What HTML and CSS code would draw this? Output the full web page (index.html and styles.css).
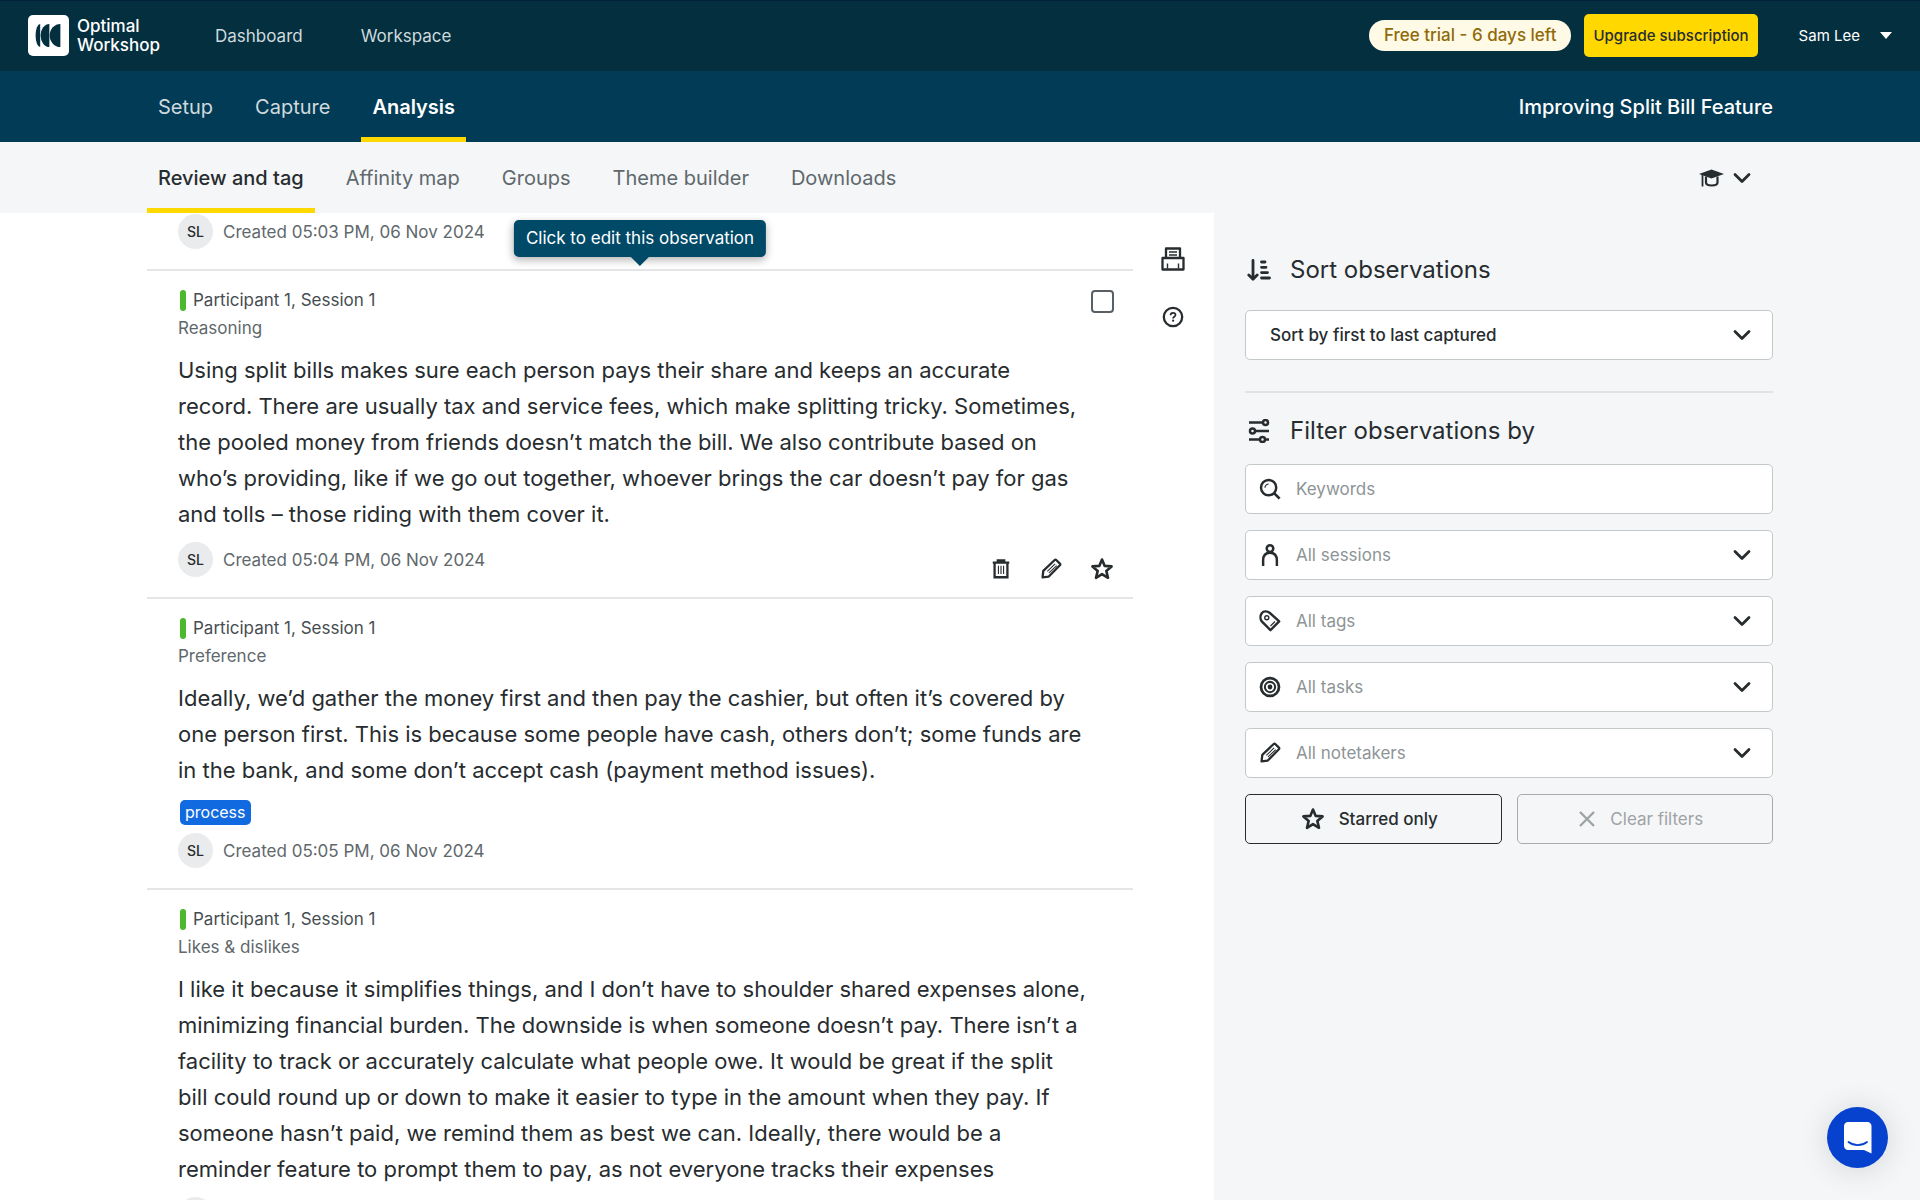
FILE: index.html
```html
<!DOCTYPE html>
<html lang="en">
<head>
  <meta charset="UTF-8" />
  <meta name="viewport" content="width=device-width, initial-scale=1.0" />
  <title>Improving Split Bill Feature - Optimal Workshop</title>
  <link rel="stylesheet" href="styles.css">
</head>
<body>
  <!-- shared icons -->
  <svg class="sprite" aria-hidden="true">
    <symbol id="chevron" viewBox="0 0 18 12"><path d="M2 2.5l7 7 7-7" fill="none" stroke="currentColor" stroke-width="2.8" stroke-linecap="round" stroke-linejoin="round"/></symbol>
    <symbol id="star" viewBox="0 0 24 24"><path d="M12 2.5l2.7 6.4 6.9.5-5.3 4.5 1.7 6.9-6-3.7-6 3.7 1.7-6.9-5.3-4.5 6.9-.5z" fill="none" stroke="currentColor" stroke-width="2.6" stroke-linejoin="round"/></symbol>
    <symbol id="pencil" viewBox="0 0 24 24"><path d="M2.8 21.2l.8-7.2L16 2.2c.6-.5 1.2-.5 1.7 0l4 4c.5.5.5 1.1 0 1.700L9.600 20.200z" fill="none" stroke="currentColor" stroke-width="2.500" stroke-linejoin="round"/><path d="M8 14.500L16.500 6.500M9.800 16.300L18.300 8.300" fill="none" stroke="currentColor" stroke-width="1.200"/></symbol>
  </svg>

  <header class="topbar">
    <a class="logo" href="#">
      <svg width="41" height="41" viewBox="0 0 41 41" aria-hidden="true">
        <rect width="41" height="41" rx="5" fill="#fff"/>
        <path d="M32.400 9v23a10.700 11.500 0 0 1 0-23z" fill="#032f3f"/>
        <path d="M21.400 9v23a8.800 11.500 0 0 1 0-23z" fill="#032f3f"/>
        <path d="M12.200 9v23a4.600 11.500 0 0 1 0-23z" fill="#032f3f"/>
      </svg>
      <span>Optimal<br>Workshop</span>
    </a>
    <nav class="topnav">
      <a href="#">Dashboard</a>
      <a href="#">Workspace</a>
    </nav>
    <div class="account">
      <span class="trial">Free trial - 6 days left</span>
      <button class="upgrade">Upgrade subscription</button>
      <button class="user">Sam Lee <span class="caret"></span></button>
    </div>
  </header>

  <div class="studybar">
    <nav class="study-tabs">
      <a href="#">Setup</a>
      <a href="#">Capture</a>
      <a href="#" class="active">Analysis</a>
    </nav>
    <h1>Improving Split Bill Feature</h1>
  </div>

  <div class="subbar">
    <nav class="sub-tabs">
      <a href="#" class="active">Review and tag</a>
      <a href="#">Affinity map</a>
      <a href="#">Groups</a>
      <a href="#">Theme builder</a>
      <a href="#">Downloads</a>
    </nav>
    <button class="learn" aria-label="Learn">
      <svg width="25" height="18" viewBox="0 0 25 18" aria-hidden="true">
        <path d="M0 5L12.500.500 25 5l-12.500 4.500z" fill="currentColor"/>
        <path d="M7 7.500v6c0 4 11.500 4 11.500 0v-6" fill="none" stroke="currentColor" stroke-width="2.200"/>
        <path d="M3.500 6v11.500" stroke="currentColor" stroke-width="1.800"/>
      </svg>
      <svg width="18" height="12" aria-hidden="true"><use href="#chevron"/></svg>
    </button>
  </div>

  <main class="page">
    <section class="panel">
      <div class="list">
        <article class="observation previous">
          <div class="foot">
            <span class="avatar">SL</span>
            <span class="created">Created 05:03 PM, 06 Nov 2024</span>
          </div>
        </article>

        <article class="observation">
          <div class="tooltip" role="tooltip">Click to edit this observation</div>
          <input class="check" type="checkbox" aria-label="Select observation">
          <div class="who">Participant 1, Session 1</div>
          <div class="task">Reasoning</div>
          <p>Using split bills makes sure each person pays their share and keeps an accurate<br>
            record. There are usually tax and service fees, which make splitting tricky. Sometimes,<br>
            the pooled money from friends doesn’t match the bill. We also contribute based on<br>
            who’s providing, like if we go out together, whoever brings the car doesn’t pay for gas<br>
            and tolls – those riding with them cover it.</p>
          <div class="foot">
            <span class="avatar">SL</span>
            <span class="created">Created 05:04 PM, 06 Nov 2024</span>
            <div class="actions">
              <button aria-label="Delete">
                <svg width="22" height="22" viewBox="0 0 24 24" aria-hidden="true"><path d="M3 5h18M5 5v16h14V5M8.500 4V2.500h7V4" fill="none" stroke="currentColor" stroke-width="2.500"/><path d="M9.200 8.500v9M12 8.500v9M14.800 8.500v9" stroke="currentColor" stroke-width="1.200"/></svg>
              </button>
              <button aria-label="Edit"><svg width="22" height="22" aria-hidden="true"><use href="#pencil"/></svg></button>
              <button aria-label="Star"><svg width="24" height="24" aria-hidden="true"><use href="#star"/></svg></button>
            </div>
          </div>
        </article>

        <article class="observation">
          <div class="who">Participant 1, Session 1</div>
          <div class="task">Preference</div>
          <p>Ideally, we’d gather the money first and then pay the cashier, but often it’s covered by<br>
            one person first. This is because some people have cash, others don’t; some funds are<br>
            in the bank, and some don’t accept cash (payment method issues).</p>
          <span class="tag">process</span>
          <div class="foot">
            <span class="avatar">SL</span>
            <span class="created">Created 05:05 PM, 06 Nov 2024</span>
          </div>
        </article>

        <article class="observation">
          <div class="who">Participant 1, Session 1</div>
          <div class="task">Likes &amp; dislikes</div>
          <p>I like it because it simplifies things, and I don’t have to shoulder shared expenses alone,<br>
            minimizing financial burden. The downside is when someone doesn’t pay. There isn’t a<br>
            facility to track or accurately calculate what people owe. It would be great if the split<br>
            bill could round up or down to make it easier to type in the amount when they pay. If<br>
            someone hasn’t paid, we remind them as best we can. Ideally, there would be a<br>
            reminder feature to prompt them to pay, as not everyone tracks their expenses</p>
          <div class="foot">
            <span class="avatar"></span>
          </div>
        </article>
      </div>

      <div class="tools">
        <button aria-label="Print">
          <svg width="24" height="24" viewBox="0 0 24 24" aria-hidden="true">
            <path d="M5 11V1.500h14V11M1.500 11h21v11.500h-21z" fill="none" stroke="currentColor" stroke-width="2.300" stroke-linejoin="round"/>
            <path d="M8 5h8M8 8h8M6.500 16.500v5M17.500 16.500v5" stroke="currentColor" stroke-width="1.400"/>
          </svg>
        </button>
        <button aria-label="Help">
          <svg width="24" height="24" viewBox="0 0 24 24" aria-hidden="true">
            <circle cx="12" cy="12" r="9.200" fill="none" stroke="currentColor" stroke-width="2.300"/>
            <path d="M9.600 10.200c0-3.200 4.900-3 4.900-.2 0 1.800-2.400 1.700-2.400 3.400" fill="none" stroke="currentColor" stroke-width="1.700"/>
            <circle cx="12.100" cy="15.700" r="1.100" fill="currentColor"/>
          </svg>
        </button>
      </div>
    </section>

    <aside class="sidebar">
      <h2>
        <svg width="24" height="24" viewBox="0 0 24 24" aria-hidden="true"><g fill="none" stroke="currentColor" stroke-width="2.800" stroke-linecap="round" stroke-linejoin="round"><path d="M6 2.500v18.500M1.800 17L6 21.200l4.200-4.200"/><path d="M14.500 4h3.500M14.500 9.300h4.500M14.500 14.600h6M14.500 20h8"/></g></svg>
        Sort observations
      </h2>
      <label class="field sort">
        <select aria-label="Sort observations"><option>Sort by first to last captured</option></select>
        <svg class="arrow" width="18" height="12" aria-hidden="true"><use href="#chevron"/></svg>
      </label>

      <h2 class="filter-title">
        <svg width="24" height="24" viewBox="0 0 24 24" aria-hidden="true"><g fill="none" stroke="currentColor" stroke-width="2.500"><path d="M2 3.500h13.500M8.500 12h13.500M2 20.500h10M18 20.500h4"/><circle cx="18.500" cy="3.500" r="2.500"/><circle cx="5.500" cy="12" r="2.500"/><circle cx="15.500" cy="20.500" r="2.500"/></g></svg>
        Filter observations by
      </h2>
      <div class="filters">
        <label class="field">
          <svg width="22" height="22" viewBox="0 0 24 24" aria-hidden="true"><circle cx="10.500" cy="10.500" r="8.300" fill="none" stroke="currentColor" stroke-width="2.700"/><path d="M16.500 16.500l6 6" stroke="currentColor" stroke-width="3"/><path d="M6.500 10.500c0-2.200 1.800-4 4-4" fill="none" stroke="currentColor" stroke-width="1.200"/></svg>
          <input type="text" placeholder="Keywords" aria-label="Keywords">
        </label>
        <label class="field">
          <svg width="22" height="22" viewBox="0 0 24 24" aria-hidden="true"><g fill="none" stroke="currentColor" stroke-width="2.700"><circle cx="12" cy="5" r="3.600"/><path d="M4.500 24v-6c0-5.500 3-8.500 7.500-8.500s7.500 3 7.500 8.500v6"/></g></svg>
          <select aria-label="Sessions"><option>All sessions</option></select>
          <svg class="arrow" width="18" height="12" aria-hidden="true"><use href="#chevron"/></svg>
        </label>
        <label class="field">
          <svg width="22" height="22" viewBox="0 0 24 24" aria-hidden="true"><path d="M3 3.500C5 1 9 1 11.500 3l10.500 9.500-9.500 9.500L3 12.500c-1.800-2.500-1.800-6.500 0-9z" fill="none" stroke="currentColor" stroke-width="2.600" stroke-linejoin="round"/><circle cx="8.500" cy="8.500" r="2.200" fill="none" stroke="currentColor" stroke-width="1.500"/><path d="M12.500 17.500l5-5" stroke="currentColor" stroke-width="1.300"/></svg>
          <select aria-label="Tags"><option>All tags</option></select>
          <svg class="arrow" width="18" height="12" aria-hidden="true"><use href="#chevron"/></svg>
        </label>
        <label class="field">
          <svg width="22" height="22" viewBox="0 0 24 24" aria-hidden="true"><g fill="none" stroke="currentColor"><circle cx="12" cy="12" r="9.800" stroke-width="3"/><circle cx="12" cy="12" r="5.600" stroke-width="2.200"/></g><circle cx="12" cy="12" r="2.600" fill="currentColor"/></svg>
          <select aria-label="Tasks"><option>All tasks</option></select>
          <svg class="arrow" width="18" height="12" aria-hidden="true"><use href="#chevron"/></svg>
        </label>
        <label class="field">
          <svg width="22" height="22" aria-hidden="true"><use href="#pencil"/></svg>
          <select aria-label="Notetakers"><option>All notetakers</option></select>
          <svg class="arrow" width="18" height="12" aria-hidden="true"><use href="#chevron"/></svg>
        </label>
        <div class="buttons">
          <button class="starred"><svg width="24" height="24" aria-hidden="true"><use href="#star"/></svg>Starred only</button>
          <button class="clear" disabled><svg width="18" height="18" viewBox="0 0 18 18" aria-hidden="true"><path d="M2 2l14 14M16 2L2 16" stroke="currentColor" stroke-width="2.400"/></svg>Clear filters</button>
        </div>
      </div>
    </aside>
  </main>

  <button class="chat" aria-label="Open chat">
    <svg width="28" height="32" viewBox="0 0 28 32" aria-hidden="true">
      <path d="M4 0h19.500c2.200 0 4 1.800 4 4v27.500L20 28H4c-2.200 0-4-1.800-4-4V4c0-2.200 1.800-4 4-4z" fill="#fff"/>
      <path d="M4.500 20c5.500 4.200 13 4.200 18.500 0" fill="none" stroke="#0742cf" stroke-width="1.800" stroke-linecap="round"/>
    </svg>
  </button>
</body>
</html>
```
FILE: styles.css
```css
* {
  box-sizing: border-box;
}
body {
  margin: 0;
  height: 100vh;
  overflow: hidden;
  display: flex;
  flex-direction: column;
  font-family: Inter, "Liberation Sans", sans-serif;
  font-size: 17px;
  color: #272c2f;
  background: #f4f6f8;
}
a {
  color: inherit;
  text-decoration: none;
}
button, input, select {
  font: inherit;
  color: inherit;
}
button {
  padding: 0;
  border: none;
  background: none;
  cursor: pointer;
}
svg {
  display: block;
  flex-shrink: 0;
}
.sprite {
  position: absolute;
  width: 0;
  height: 0;
}

/* header */
.topbar {
  flex: 0 0 71px;
  display: flex;
  align-items: center;
  padding: 0 28px;
  background: #032f3f;
  box-shadow: inset 0 1px #02203a;
  color: #fff;
}
.logo {
  display: flex;
  align-items: center;
  gap: 8px;
  width: 187px;
  font-size: 17px;
  font-weight: 500;
  line-height: 19px;
}
.topnav {
  display: flex;
  gap: 58px;
  color: #cfdade;
}
.account {
  display: flex;
  align-items: center;
  margin-left: auto;
}
.trial {
  padding: 0 15px;
  border-radius: 16px;
  background: #fffae6;
  color: #8f6a0a;
  font-weight: 500;
  line-height: 31px;
}
.upgrade {
  height: 43px;
  margin: 0 41px 0 13px;
  padding: 0 9px;
  border-radius: 5px;
  background: #ffd800;
  color: #272c2f;
  font-size: 15px;
  font-weight: 500;
}
.user {
  display: flex;
  align-items: center;
  gap: 20px;
  font-size: 15px;
}
.caret {
  border: 6px solid transparent;
  border-top: 7px solid #fff;
  border-bottom: none;
}

.studybar, .subbar {
  flex: 0 0 71px;
  display: flex;
  align-items: center;
  justify-content: space-between;
  padding: 0 147px;
  font-size: 20px;
}
.studybar {
  background: #023b55;
  color: #fff;
}
.studybar h1 {
  margin: 0;
  font-size: 20px;
  font-weight: 500;
}
.study-tabs, .sub-tabs {
  display: flex;
  gap: 20px;
}
.study-tabs a, .sub-tabs a {
  padding: 2px 11px 0;
  border-top: 5px solid transparent;
  border-bottom: 5px solid transparent;
  line-height: 59px;
}
.study-tabs {
  color: #cfdade;
}
.study-tabs .active {
  color: #fff;
  font-weight: 600;
  border-bottom-color: #ffd800;
}
.sub-tabs {
  color: #60686c;
}
.sub-tabs .active {
  color: #272c2f;
  font-weight: 500;
  border-bottom-color: #ffd800;
}
.learn {
  display: flex;
  align-items: center;
  gap: 9px;
  margin-right: 22px;
}

/* observations */
.page {
  flex: 1;
  min-height: 0;
  display: grid;
  grid-template-columns: minmax(0, 1214fr) minmax(0, 706fr);
}
.panel {
  display: flex;
  min-height: 0;
  overflow: hidden;
  padding-left: 147px;
  background: #fff;
}
.list {
  flex: 1;
}
.observation {
  position: relative;
  padding: 15px 19px 16px 31px;
  border-bottom: 2px solid #e3e5e7;
}
.previous {
  padding-top: 1px;
}
.observation p {
  margin: 10px 0;
  font-size: 22px;
  line-height: 36px;
  white-space: nowrap;
}
.who {
  display: flex;
  align-items: center;
  gap: 7px;
  margin-left: 2px;
  line-height: 28px;
  color: #464d51;
}
.who::before {
  content: "";
  width: 6px;
  height: 21px;
  border-radius: 3px;
  background: #4cb82e;
}
.task {
  line-height: 28px;
  color: #60686c;
}
.tag {
  display: block;
  width: fit-content;
  margin: 12px 0 8px 2px;
  padding: 0 5px;
  border-radius: 5px;
  background: #116ae0;
  color: #fff;
  font-size: 16px;
  line-height: 25px;
}
.foot {
  display: flex;
  gap: 10px;
  height: 39px;
}
.avatar {
  width: 35px;
  height: 35px;
  border-radius: 50%;
  background: #e9ebec;
  font-size: 14px;
  font-weight: 500;
  line-height: 35px;
  text-align: center;
}
.created {
  line-height: 36px;
  color: #60686c;
}
.actions {
  display: flex;
  align-items: center;
  align-self: flex-end;
  gap: 28px;
  margin-left: auto;
}
.check {
  appearance: none;
  position: absolute;
  top: 19px;
  right: 19px;
  width: 23px;
  height: 23px;
  margin: 0;
  border: 2px solid #586066;
  border-radius: 4px;
  background: #fff;
}
.tooltip {
  position: absolute;
  bottom: calc(100% + 14px);
  left: 50%;
  transform: translateX(-50%);
  padding: 0 12px;
  border-radius: 5px;
  background: #004a68;
  box-shadow: 0 3px 8px rgba(0, 0, 0, 0.3);
  color: #fff;
  line-height: 37px;
  white-space: nowrap;
}
.tooltip::after {
  content: "";
  position: absolute;
  top: 100%;
  left: 50%;
  margin-left: -9px;
  border: 9px solid transparent;
  border-top-color: #004a68;
  border-bottom: none;
}
.tools {
  display: flex;
  flex-direction: column;
  gap: 34px;
  width: 81px;
  padding: 34px 28px;
}

/* sort and filter */
.sidebar {
  padding: 37px 147px 0 31px;
}
h2 {
  display: flex;
  align-items: center;
  gap: 19px;
  margin: 0;
  padding-left: 2px;
  font-size: 24px;
  font-weight: 400;
  line-height: 40px;
}
.field {
  display: flex;
  align-items: center;
  gap: 15px;
  height: 50px;
  padding: 0 21px 0 13px;
  border: 1px solid #c3c8cb;
  border-radius: 5px;
  background: #fff;
}
.field select, .field input {
  flex: 1;
  min-width: 0;
  height: 100%;
  padding: 0;
  border: none;
  outline: none;
  appearance: none;
  background: none;
  color: #8d9497;
}
.field input::placeholder {
  color: #8d9497;
  opacity: 1;
}
.sort {
  margin-top: 20px;
  padding-left: 24px;
}
.sort select {
  color: #272c2f;
  font-weight: 500;
}
.filter-title {
  margin: 31px 0 13px;
  padding-top: 18px;
  border-top: 2px solid #e0e3e6;
}
.filters {
  display: grid;
  gap: 16px;
}
.buttons {
  display: grid;
  grid-template-columns: 1fr 1fr;
  gap: 15px;
}
.buttons button {
  display: flex;
  align-items: center;
  justify-content: center;
  gap: 14px;
  height: 50px;
  padding-right: 8px;
  border: 1px solid #272c2f;
  border-radius: 5px;
}
.starred {
  font-weight: 500;
}
.buttons .clear {
  border-color: #a7acae;
  color: #9ea3a6;
}

.chat {
  position: fixed;
  right: 32px;
  bottom: 32px;
  display: flex;
  align-items: center;
  justify-content: center;
  width: 61px;
  height: 61px;
  border-radius: 50%;
  background: #0742cf;
  box-shadow: 0 2px 32px rgba(0, 0, 0, 0.14);
}
```
